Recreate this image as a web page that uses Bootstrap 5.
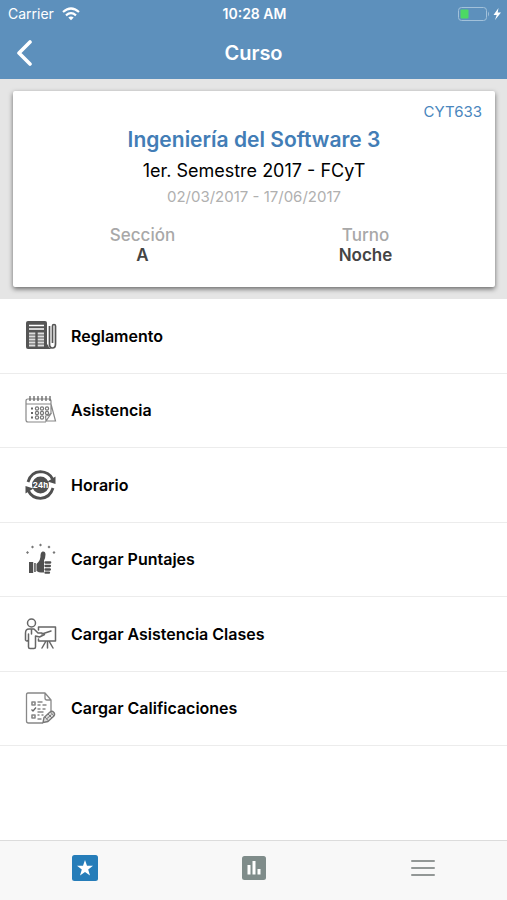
<!DOCTYPE html>
<html lang="es">
<head>
<meta charset="utf-8">
<meta name="viewport" content="width=device-width, initial-scale=1">
<title>Curso</title>
<link href="https://cdn.jsdelivr.net/npm/bootstrap@5.3.0/dist/css/bootstrap.min.css" rel="stylesheet">
<style>
body { font-family: Inter, "Liberation Sans", sans-serif; color: #000; background: #fff; }
svg { display: block; flex: none; }
.app-head { background: #5d90bc; color: #fff; }
.status { height: 27px; padding: 0 6px 0 8px; font-size: 14px; line-height: 20px; }
.status > * { flex: 1 1 0; }
.title-bar { height: 52px; padding: 0 17px; }
.title-bar > * { flex: 1 1 0; }
.title-bar h1 { font-size: 20px; line-height: 24px; font-weight: 600; }
.back { color: #fff; }
.summary { background: #e5e5e5; padding: 12px 12px 12px 13px; }
.course { border-radius: 2px; padding: 12px 13px 22px; box-shadow: 0 2px 5px rgba(0,0,0,.55); }
.code { font-size: 15px; line-height: 18px; color: #4a86bd; }
.course h2 { font-size: 21px; line-height: 28px; font-weight: 600; color: #427db6; margin-top: 5px; }
.term { font-size: 18px; line-height: 24px; margin-top: 5px; }
.dates { font-size: 15px; line-height: 20px; color: #b0b0b0; margin-top: 4px; }
.facts { padding: 0 5px; margin-top: 18px; font-size: 17px; line-height: 20px; }
.facts dt { font-weight: 500; color: #a8a8a8; }
.facts dd { font-weight: 600; color: #444; }
.options { display: grid; grid-auto-rows: 1fr; min-height: 447px; }
.option { border: 0; border-bottom: 1px solid #ececec; padding: 0 24px; color: #000; font-size: 16px; font-weight: 600; line-height: 24px; gap: 14px; background: #fff; }
.tabs { height: 60px; background: #f8f8f8; border-top: 1px solid #dcdcdc; padding-bottom: 5px; }
</style>
<script src="https://cdn.jsdelivr.net/npm/bootstrap@5.3.0/dist/js/bootstrap.bundle.min.js"></script>
</head>
<body>
<div class="d-flex flex-column min-vh-100">
  <header class="app-head">
    <div class="status d-flex align-items-center">
      <div class="d-flex align-items-center gap-2">
        <span>Carrier</span>
        <svg width="18" height="14" viewBox="0 0 18 14" fill="none" stroke="#fff" stroke-width="2.2" aria-hidden="true"><path d="M1 5Q9-2 17 5M4 8.300Q9 4 14 8.300"/><path d="M6.300 10.500Q9 8.300 11.700 10.500L9 13.300z" fill="#fff" stroke="none"/></svg>
      </div>
      <div class="text-center fw-semibold">10:28 AM</div>
      <div class="d-flex justify-content-end">
        <svg width="44" height="16" viewBox="0 0 44 16" aria-hidden="true"><rect x="1.500" y="1.500" width="28" height="13" rx="3" fill="none" stroke="#a2c1da"/><rect x="3.500" y="3.500" width="8" height="9" rx="1" fill="#4cd964"/><path d="M31 5.500q2 2.500 0 5z" fill="#a2c1da"/><path d="M41.500 2L36.500 9h3.200L38 14l6-7.500h-3.300z" fill="#fff"/></svg>
      </div>
    </div>
    <nav class="title-bar d-flex align-items-center" aria-label="Principal">
      <div class="d-flex"><a class="back d-block" href="#" aria-label="Volver"><svg width="16" height="26" viewBox="0 0 16 26" fill="none" stroke="#fff" stroke-width="3.600" stroke-linecap="round" stroke-linejoin="round"><path d="M13 2L2 13l11 11"/></svg></a></div>
      <h1 class="text-center m-0">Curso</h1>
      <div></div>
    </nav>
  </header>
  <main class="flex-grow-1">
    <section class="summary">
      <article class="course bg-white text-center">
        <div class="code text-end">CYT633</div>
        <h2 class="mb-0">Ingeniería del Software 3</h2>
        <div class="term">1er. Semestre 2017 - FCyT</div>
        <div class="dates">02/03/2017 - 17/06/2017</div>
        <div class="facts row g-0">
          <dl class="col-6 mb-0"><dt>Sección</dt><dd class="mb-0">A</dd></dl>
          <dl class="col-6 mb-0"><dt>Turno</dt><dd class="mb-0">Noche</dd></dl>
        </div>
      </article>
    </section>
    <nav class="options" aria-label="Opciones del curso">
      <a class="option d-flex align-items-center text-decoration-none" href="#">
        <svg width="33" height="32" viewBox="0 0 33 32" fill="none" stroke="#555" aria-hidden="true"><rect x="2" y="1" width="21" height="28" rx="2" fill="#555" stroke="none"/><path d="M20 29h8q-4-1-4-5z" fill="#555" stroke="none"/><path d="M5 5.500h15M5 9h15" stroke="#fff" stroke-width="1.600"/><path d="M5 13.500h6.300M5 16.500h6.300M5 19.500h6.300M5 22.500h6.300M5 25.500h6.300M13.700 13.500H20M13.700 16.500H20M13.700 19.500H20M13.700 22.500H20M13.700 25.500H20" stroke="#ddd" stroke-width="2"/><path d="M25.500 6v18q0 4 3 4t3-4V6q0-1.500-1.500-1.500T28.500 6v17" stroke-width="1.700"/></svg>
        <span>Reglamento</span>
      </a>
      <a class="option d-flex align-items-center text-decoration-none" href="#">
        <svg width="33" height="32" viewBox="0 0 33 32" fill="none" stroke="#888" stroke-width="1.200" aria-hidden="true"><path d="M22 28H4q-2 0-2-2V7q0-2 2-2h21q2 0 2 2v12M2 10h25M27 10l4.500 17H22M27.500 19L22 27l-.5-5q3 0 6-3z"/><path d="M6 2v5M10 2v5M14 2v5M18 2v5M22 2v5M26 2v5" stroke="#666" stroke-width="1.300"/><g stroke="#777"><circle cx="13" cy="14.500" r="1.600"/><circle cx="18" cy="14.500" r="1.600"/><circle cx="23" cy="14.500" r="1.600"/><circle cx="13" cy="19" r="1.600"/><circle cx="18" cy="19" r="1.600"/><circle cx="23" cy="19" r="1.600"/><circle cx="13" cy="23.500" r="1.600"/><circle cx="18" cy="23.500" r="1.600"/></g><path d="M7 14.500h2M7 19h2M7 23.500h2" stroke="#666" stroke-width="2"/></svg>
        <span>Asistencia</span>
      </a>
      <a class="option d-flex align-items-center text-decoration-none" href="#">
        <svg width="33" height="32" viewBox="0 0 33 32" aria-hidden="true"><circle cx="16.500" cy="16" r="8.500" fill="#505050"/><g fill="none" stroke="#505050" stroke-width="2.800"><path d="M4 13Q7 3 16.500 2.700Q25 3 28.500 10"/><path d="M29 19Q26 29 16.500 29.300Q8 29 4.500 22"/></g><path d="M31.500 7.500v7.500L23.500 12.500zM1.500 24.500V17L9.500 19.500z" fill="#505050"/><text x="16.500" y="19" text-anchor="middle" font-family="Inter, sans-serif" font-weight="700" font-size="8" fill="#fff">24h</text></svg>
        <span>Horario</span>
      </a>
      <a class="option d-flex align-items-center text-decoration-none" href="#">
        <svg width="33" height="32" viewBox="0 0 33 32" fill="#505050" aria-hidden="true"><path d="M3.500 8l1.500 1.500L3.500 11 2 9.500zM8.500 2.500L10 4 8.500 5.500 7 4zM16.500.5L18 2l-1.500 1.500L15 2zM25 2.500L26.500 4 25 5.500 23.500 4zM30 8l1.500 1.500L30 11l-1.500-1.500z" fill="#777"/><path d="M5 19h4.200v11H5zM10.200 20h1.500v9h-1.500zM12.500 21Q17 17 16.500 12q0-3 2-3.500 3-.5 3 3 0 3-1.500 6v12h-3q-2 0-4.500-1.500z"/><path d="M21.500 19.500h4.700M21.500 23h4.400M21.500 26.500h4.400M21.500 29.700h3.500" stroke="#505050" stroke-width="2.300" stroke-linecap="round"/></svg>
        <span>Cargar Puntajes</span>
      </a>
      <a class="option d-flex align-items-center text-decoration-none" href="#">
        <svg width="33" height="32" viewBox="0 0 33 32" fill="none" stroke="#666" stroke-width="1.500" stroke-linejoin="round" stroke-linecap="round" aria-hidden="true"><circle cx="7.500" cy="5" r="4"/><path d="M5 11Q1.500 11 1.500 15v7q1 2 3 0v7q0 1.500 1.500 1.500h4q1.500 0 1.500-1.500V18l4 1 5-2.500M5 11h5l4 4h4M4.500 16v6M7.500 12v4"/><path d="M14.500 12V9H31.500v14H14.500v-2M18 16l9-3M23.500 23v7M22 23l-4 7M25 23l4 7"/></svg>
        <span>Cargar Asistencia Clases</span>
      </a>
      <a class="option d-flex align-items-center text-decoration-none" href="#">
        <svg width="33" height="32" viewBox="0 0 33 32" fill="none" stroke="#888" stroke-width="1.300" stroke-linejoin="round" aria-hidden="true"><path d="M27 19V8l-6-7H4Q2.500 1 2.500 3v26q0 2 2 2H19M21 1v5q0 2 2 2h4"/><path d="M8 10h3v3H8zM8 23h3v3H8z" stroke-width="1.600"/><path d="M7.500 17.500l1.500 1.500 3-3.500" stroke="#666"/><path d="M13.500 10h5M13.500 13h3m2 0h4M13.500 17h3m2 0h3M13.500 20h6M13.500 23h2m2 0h2M13.500 27h4" stroke="#888" stroke-width="1.400"/><path d="M20 25.500l6-5.500q2-1.500 3.700.2T30 24l-6 5.500-5 1z" fill="#ddd" stroke="#777"/><path d="M21 25l3.500 4M24 22l4 4M26.500 20l3.500 4M22.500 27l5-4.500" stroke="#777" stroke-width="1"/></svg>
        <span>Cargar Calificaciones</span>
      </a>
    </nav>
  </main>
  <nav class="tabs d-flex" aria-label="Secciones">
    <a class="flex-fill col d-flex align-items-center justify-content-center" href="#" aria-label="Favoritos" aria-current="page"><svg width="26" height="26" viewBox="0 0 26 26"><rect width="26" height="26" rx="2.500" fill="#267db9"/><path d="M13 5l2 5.700 6 .1-4.800 3.700 1.800 5.900-5-3.500-5 3.500 1.800-5.900L5 10.800l6-.1z" fill="#fff"/></svg></a>
    <a class="flex-fill col d-flex align-items-center justify-content-center" href="#" aria-label="Estadísticas"><svg width="24" height="24" viewBox="0 0 24 24"><rect width="24" height="24" rx="2.500" fill="#7f8c8a"/><path d="M5.500 9h3v9.500h-3zM10.500 5h3v13.500h-3zM15.500 13h3v5.500h-3z" fill="#fff"/></svg></a>
    <a class="flex-fill col d-flex align-items-center justify-content-center" href="#" aria-label="Menú"><svg width="24" height="18" viewBox="0 0 24 18"><path d="M1 2h22M1 9h22M1 16h22" stroke="#929796" stroke-width="2" stroke-linecap="round"/></svg></a>
  </nav>
</div>
</body>
</html>
